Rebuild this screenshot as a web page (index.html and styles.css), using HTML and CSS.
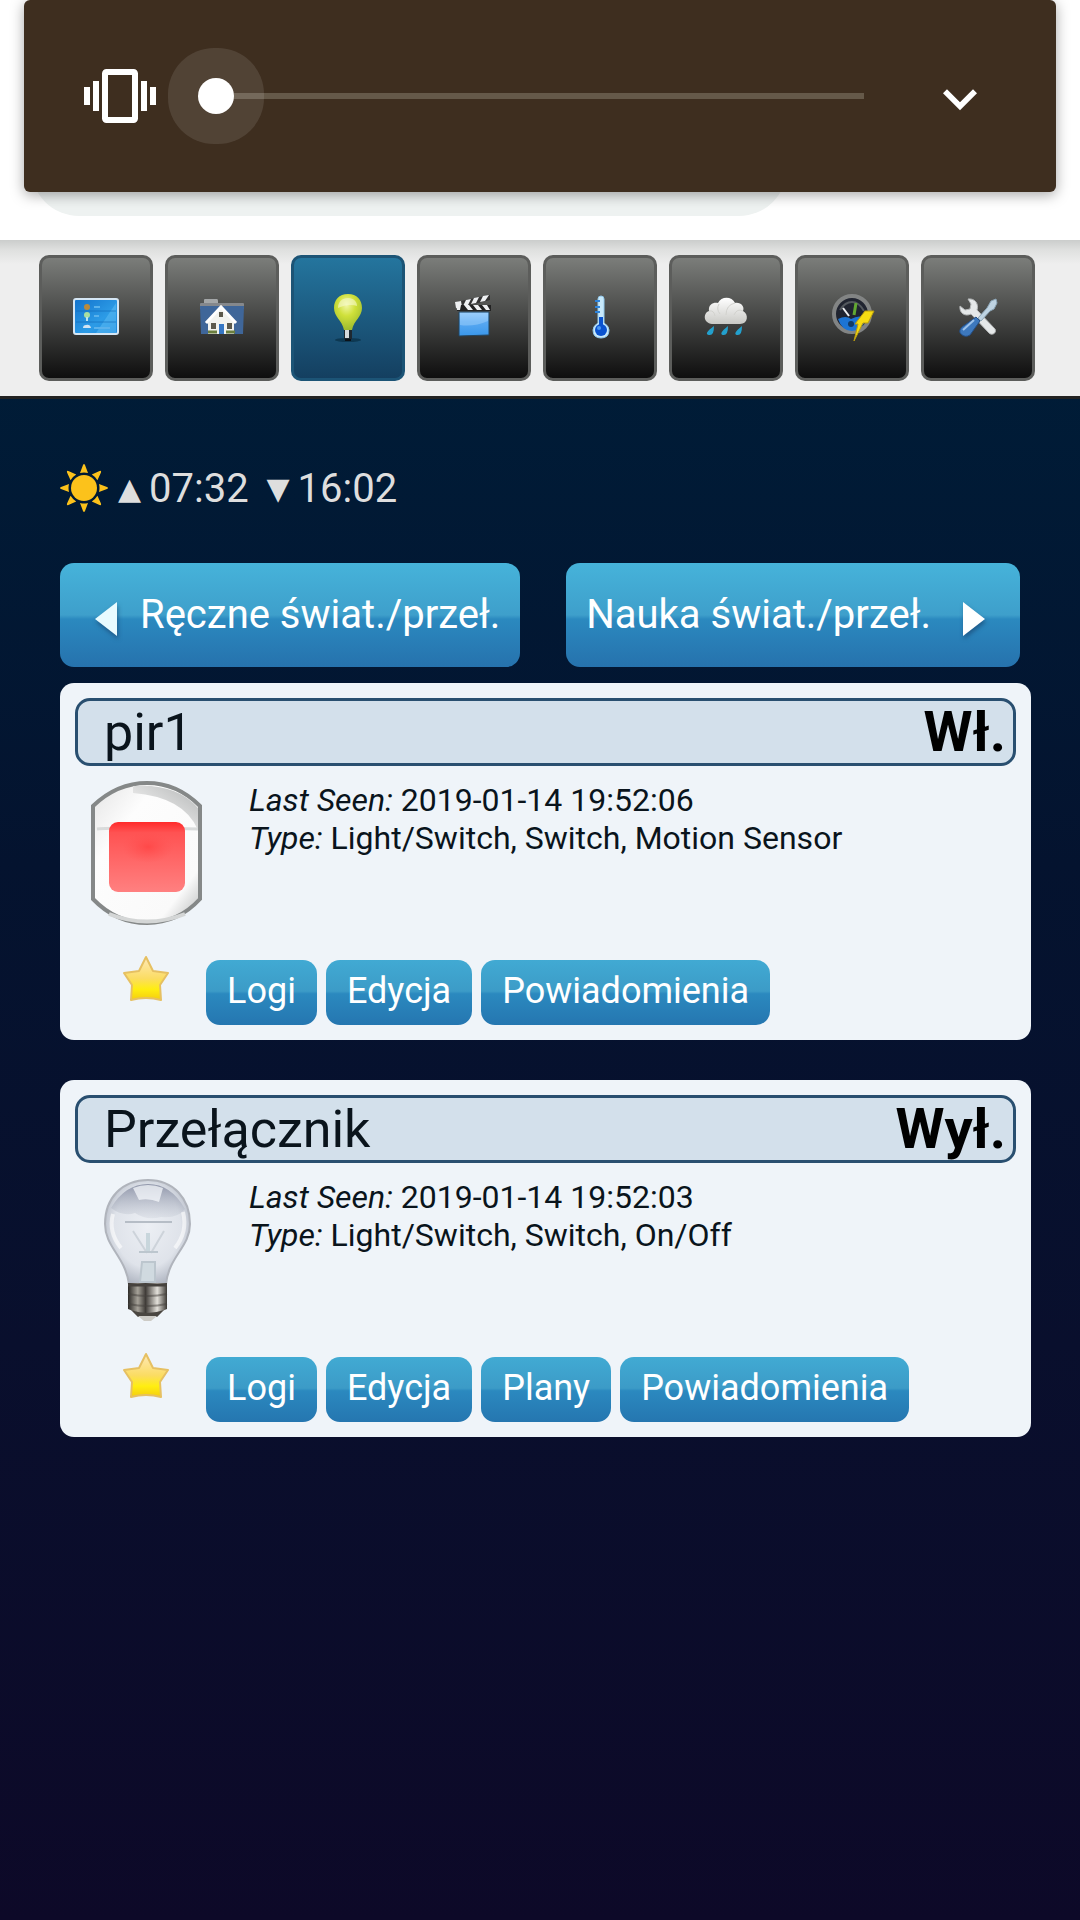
FILE: index.html
```
<!DOCTYPE html>
<html lang="pl">
<head>
  <meta charset="UTF-8" />
  <meta name="viewport" content="width=device-width, initial-scale=1.0"/>
  <title>Domoticz</title>
  <link rel="stylesheet" href="styles.css">
</head>
<body>

  <header class="browser-bar">
    <div class="omnibox"></div>
    <div class="volume-panel">
      <svg class="vibrate" viewBox="0 0 24 24" aria-hidden="true">
        <path fill="#fff" d="M0 15h2V9H0v6zm3 2h2V7H3v10zm19-8v6h2V9h-2zm-3 8h2V7h-2v10zM16.500 3h-9C6.670 3 6 3.670 6 4.500v15c0 .83.67 1.500 1.500 1.500h9c.83 0 1.500-.67 1.500-1.500v-15c0-.83-.67-1.500-1.500-1.500zM16 19H8V5h8v14z"/>
      </svg>
      <input type="range" class="volume" min="0" max="100" value="0" aria-label="Volume">
      <button type="button" class="expand" aria-label="Expand">
        <svg viewBox="0 -1 24 24"><path fill="#fff" d="M16.590 8.590L12 13.170 7.410 8.590 6 10l6 6 6-6z"/></svg>
      </button>
    </div>
  </header>

  <nav class="navbar">
    <a href="#floorplan" aria-label="Floorplan">
      <svg viewBox="0 0 48 48">
        <defs><linearGradient id="screen" x1="0" y1="0" x2="1" y2="1"><stop offset="0" stop-color="#1272cc"/><stop offset=".6" stop-color="#2c9be6"/><stop offset="1" stop-color="#1c86dc"/></linearGradient></defs>
        <rect x="2" y="5" width="44" height="35" rx="2" fill="url(#screen)" stroke="#d5e6f4" stroke-width="2"/>
        <path d="M24 39L44 9v30z" fill="#5fc0f5" opacity=".5"/>
        <path d="M4 17h40M4 28h40" stroke="#1166b4" opacity=".6"/>
        <circle cx="15" cy="13" r="3" fill="#b98a3c"/>
        <circle cx="15" cy="21" r="3" fill="#a9dfa0"/><path d="M14 23h2v4h-2z" fill="#bde4ee"/>
        <path d="M11 34q0-3 3-3 4-1 5 3z" fill="#d4e4f2"/>
        <path d="M22 13h6M22 22h5M22 34h16" stroke="#5bb2ec" stroke-width="2"/>
      </svg>
    </a>
    <a href="#dashboard" aria-label="Dashboard">
      <svg viewBox="0 0 48 48">
        <path d="M6 10V6q0-1 1-1h12q1 0 1 2v3z" fill="#a4a7a8"/>
        <path d="M2 10q0-1 1-1h42q1 0 1 1v5H2z" fill="#85888c"/>
        <path d="M2 12h44l-1 28H3z" fill="#3f6699"/>
        <path d="M10 27L23 14l13 13v13H10z" fill="#f2f3ef"/>
        <path d="M8 29L23 13l15 16" fill="none" stroke="#fff" stroke-width="3"/>
        <path d="M21 18h4v5h-4zM13 29h5v6h-5zM29 29h5v6h-5z" fill="#5c594c"/>
        <path d="M21 30h5v10h-5z" fill="#3677c4"/>
        <path d="M10 38h9M28 38h9" stroke="#6b7f3f" stroke-width="3"/>
      </svg>
    </a>
    <a href="#lights" class="current" aria-label="Lights">
      <svg viewBox="0 0 48 48">
        <defs><radialGradient id="glow" cx=".45" cy=".3" r=".7"><stop offset="0" stop-color="#f2f7a6"/><stop offset=".45" stop-color="#cfe03a"/><stop offset="1" stop-color="#9dbb2e"/></radialGradient></defs>
        <ellipse cx="24" cy="46" rx="13" ry="2" fill="#0d3852"/>
        <path d="M24 0C15 0 10 6 10 14c0 9 8 12 10 22h8c2-10 10-13 10-22C38 6 33 0 24 0z" fill="url(#glow)"/>
        <path d="M14 14c0-6 4-10 10-10s9 4 9 8c-5-2-13-1-19 2z" fill="#f7fad0" opacity=".6"/>
        <path d="M20 36h8v9h-8z" fill="#1e2830"/><path d="M21 36h4v8h-4z" fill="#d6dadd"/><path d="M21 45h6v2h-6z" fill="#0c1218"/>
      </svg>
    </a>
    <a href="#scenes" aria-label="Scenes">
      <svg viewBox="-2 0 48 48">
        <defs><linearGradient id="slate" x1="0" y1="0" x2="0" y2="1"><stop offset="0" stop-color="#8cc6fa"/><stop offset=".4" stop-color="#5aa9f2"/><stop offset="1" stop-color="#3a97ea"/></linearGradient></defs>
        <path d="M4 8l34-7v5L5 14z" fill="#333"/>
        <path d="M3 8l6-1 1 6-6 1zM14 6l5-1-3 6-5 1zM22 4l5-1-3 6-5 1zM31 2l6-1-4 6-5 1z" fill="#eef0f2"/>
        <path d="M5 11h34v6H5z" fill="#222"/>
        <path d="M4 10l5 1-1 5H5zM12 11h5l4 5h-5zM21 11h5l4 5h-5zM30 11h5l3 5h-4z" fill="#eef0f2"/>
        <path d="M7 18h30v23l-30 1z" fill="url(#slate)" stroke="#23445f"/>
        <path d="M8 19h28v8q-14 6-28 4z" fill="#b4dcff" opacity=".4"/>
      </svg>
    </a>
    <a href="#temperature" aria-label="Temperature">
      <svg viewBox="-1 0 48 48">
        <path d="M21 5q0-3 3-3t3 3v24q5 3 5 7 0 8-8 8t-8-8q0-4 5-7z" fill="#c8e9fb" stroke="#93c9ec"/>
        <circle cx="24" cy="36" r="6" fill="#0a53cf"/>
        <path d="M22 23h4v12h-4z" fill="#0a53cf"/>
        <circle cx="22" cy="34" r="2" fill="#4b98f3"/>
        <path d="M18 7h5M18 13h5M18 18h5" stroke="#2c83dd" stroke-width="2"/>
      </svg>
    </a>
    <a href="#weather" aria-label="Weather">
      <svg viewBox="0 0 48 48">
        <defs><linearGradient id="cloud" x1="0" y1="0" x2="0" y2="1"><stop offset="0" stop-color="#fff"/><stop offset="1" stop-color="#c9c9c5"/></linearGradient></defs>
        <path d="M10 30c-9-1-9-11-3-13-1-7 5-9 9-8 3-7 14-7 17 0 6-1 10 4 8 8 6 3 5 13-3 13z" fill="url(#cloud)"/>
        <path d="M7 17q5-1 6 5M17 10q-3 5 1 10M33 9q-9 2-9 12M41 17q-6-3-9 4" fill="none" stroke="#d2d2ce"/>
        <path d="M12 32q0 10-5 9-6-1 5-9zM26 32q0 10-5 9-5-1 5-9zM40 32q0 10-5 9-5-1 5-9z" fill="#23a0cd"/>
      </svg>
    </a>
    <a href="#utility" aria-label="Utility">
      <svg viewBox="-4 0 48 48">
        <circle cx="20" cy="20" r="18" fill="#202430" stroke="#828484" stroke-width="4"/>
        <path d="M6 25q8-4 13 0 9-5 15 0-4 12-14 12T6 25z" fill="#1c74d4"/>
        <path d="M8 16q5-8 12-8t12 9" fill="none" stroke="#53585e" stroke-width="2"/>
        <path d="M11 14l6 8" stroke="#eef0f2" stroke-width="2"/>
        <path d="M24 9l-2 12" stroke="#61a832" stroke-width="3"/>
        <circle cx="19" cy="30" r="3" fill="#123a66"/>
        <path d="M33 17h9l-6 12h-5L22 47l4-17h-3z" fill="#f7dc12" stroke="#b99c10"/>
      </svg>
    </a>
    <a href="#setup" aria-label="Setup">
      <svg viewBox="-2 0 48 48">
        <path d="M12 5c7-1 11 5 9 11l18 19c2 4-3 7-6 4L15 20C9 23 3 19 4 12l5 4 5-1 1-5z" fill="#e5e8e9" stroke="#b5b8b9"/>
        <path d="M35 7l5-2 1 4-3 6-4 2-9 10-3-3 9-10z" fill="#bed3e2" stroke="#8ca5b7"/>
        <path d="M20 23l4 4-10 14q-5 3-9-1-3-3 1-7z" fill="#3d78bd" stroke="#244f86"/>
        <path d="M18 26L7 36" stroke="#9cc2ea" stroke-width="2"/>
      </svg>
    </a>
  </nav>

  <main>
    <div class="suntimes">
      <svg viewBox="0 0 48 48" aria-hidden="true">
        <g fill="#fcc21b">
          <circle cx="24" cy="24" r="13"/>
          <g id="rays"><path d="M20 9l3-8q1-2 2 0l3 8q-4-1-8 0zM20 39l3 8q1 2 2 0l3-8q-4 1-8 0zM9 20l-8 3q-2 1 0 2l8 3q-1-4 0-8zM39 20l8 3q2 1 0 2l-8 3q1-4 0-8z"/></g>
          <use href="#rays" transform="rotate(45 24 24)"/>
        </g>
      </svg>
      <span class="arrow">▲</span><span>07:32</span>
      <span class="arrow down">▼</span><span>16:02</span>
    </div>

    <div class="toolbar">
      <button type="button" class="btn btn-large">
        <svg class="prev" viewBox="0 0 24 36"><path d="M23 1v34L1 18z" fill="#e9fbff"/></svg>
        Ręczne świat./przeł.
      </button>
      <button type="button" class="btn btn-large">
        Nauka świat./przeł.
        <svg class="next" viewBox="0 0 24 36"><path d="M1 1v34l22-17z" fill="#fff"/></svg>
      </button>
    </div>

    <section class="device">
      <div class="device-head">
        <h2>pir1</h2>
        <strong>Wł.</strong>
      </div>
      <div class="device-body">
        <svg class="device-icon" viewBox="0 0 144 144" aria-hidden="true">
          <defs>
            <linearGradient id="shell" x1="0" y1="0" x2="1" y2="1"><stop offset="0" stop-color="#e4e4e4"/><stop offset=".3" stop-color="#fdfdfd"/><stop offset=".8" stop-color="#fafafa"/><stop offset="1" stop-color="#b4b6b6"/></linearGradient>
            <linearGradient id="shade" x1="0" y1="1" x2="1" y2="0"><stop offset=".2" stop-color="#f4f4f4"/><stop offset="1" stop-color="#b4b6b6"/></linearGradient>
            <linearGradient id="lens" x1="0" y1="0" x2="0" y2="1"><stop offset="0" stop-color="#ff2a2a"/><stop offset=".15" stop-color="#ff5252"/><stop offset=".5" stop-color="#ff6565"/><stop offset="1" stop-color="#ff8080"/></linearGradient>
            <radialGradient id="spot"><stop offset="0" stop-color="#ff4040" stop-opacity=".7"/><stop offset="1" stop-color="#ff5050" stop-opacity="0"/></radialGradient>
          </defs>
          <path d="M18 25Q42 2 72 2t53 23v93q-22 24-53 24t-54-24z" fill="url(#shell)" stroke="#858888" stroke-width="4"/>
          <path d="M58 5q44-3 65 22v22q-14-33-65-37z" fill="url(#shade)"/>
          <path d="M22 48q16-2 101 0" fill="none" stroke="#d9dbdb" stroke-width="3"/>
          <path d="M34 133q38 15 76 0" fill="none" stroke="#d4d6d6" stroke-width="4"/>
          <rect x="34" y="41" width="76" height="70" rx="9" fill="url(#lens)"/>
          <ellipse cx="73" cy="66" rx="26" ry="16" fill="url(#spot)"/>
        </svg>
        <p><i>Last Seen:</i> 2019-01-14 19:52:06<br><i>Type:</i> Light/Switch, Switch, Motion Sensor</p>
      </div>
      <div class="device-actions">
        <svg class="star" viewBox="0 0 48 48" aria-hidden="true">
          <defs><linearGradient id="gold" x1="0" y1="0" x2="0" y2="1"><stop offset="0" stop-color="#ffe9b8"/><stop offset=".5" stop-color="#fbdc62"/><stop offset=".75" stop-color="#ffee10"/><stop offset="1" stop-color="#f4cd10"/></linearGradient></defs>
          <path id="star-shape" d="M24 2l7 14 15 2-8 12 1 15q-15-4-30 0l1-15L2 18l15-2z" fill="url(#gold)" stroke="#e6c062" stroke-width="2" stroke-linejoin="round"/>
        </svg>
        <button type="button" class="btn">Logi</button>
        <button type="button" class="btn">Edycja</button>
        <button type="button" class="btn">Powiadomienia</button>
      </div>
    </section>

    <section class="device">
      <div class="device-head">
        <h2>Przełącznik</h2>
        <strong>Wył.</strong>
      </div>
      <div class="device-body">
        <svg class="device-icon" viewBox="0 0 144 144" aria-hidden="true">
          <defs>
            <radialGradient id="glass" cx=".5" cy=".45" r=".6"><stop offset="0" stop-color="#eceff4"/><stop offset=".65" stop-color="#dfe3ea"/><stop offset="1" stop-color="#a9afbc"/></radialGradient>
            <linearGradient id="haze" x1="0" y1="0" x2="0" y2="1"><stop offset="0" stop-color="#9096aa"/><stop offset="1" stop-color="#b9bfcb" stop-opacity=".2"/></linearGradient>
            <linearGradient id="cap" x1="0" y1="0" x2="1" y2="0"><stop offset="0" stop-color="#2c2a27"/><stop offset=".25" stop-color="#a6a299"/><stop offset=".45" stop-color="#403c38"/><stop offset=".75" stop-color="#e3e0da"/><stop offset="1" stop-color="#3b3834"/></linearGradient>
          </defs>
          <path d="M73 2C47 2 30 20 30 46c0 23 20 32 24 60h37c3-28 24-37 24-60 0-26-17-44-42-44z" fill="url(#glass)" stroke="#b0b4bc" stroke-width="2"/>
          <path d="M36 30Q50 6 73 6t37 25q-8 10-24 8-14 4-26-4-12 4-24-5z" fill="url(#haze)"/>
          <path d="M58 10q15-6 30 0l-4 14q-10-4-20-2z" fill="#fafcff" opacity=".7"/>
          <path d="M38 36q-5 18 8 34M108 34q5 20-8 36" fill="none" stroke="#fff" stroke-width="4" opacity=".6"/>
          <path d="M50 44h47" stroke="#b6bdc6" stroke-width="2"/>
          <path d="M58 53l14 22M89 53L76 75" fill="none" stroke="#cdd3da" stroke-width="2"/>
          <path d="M73 55v19" stroke="#c8d6dc" stroke-width="4"/>
          <path d="M64 74h19M67 84h13v20H65z" fill="#d0dae0" stroke="#bcc6ce" stroke-width="2"/>
          <path d="M53 105h39v26q-19 9-39 0z" fill="url(#cap)"/>
          <path d="M53 107h39" stroke="#46423e" stroke-width="3"/>
          <path d="M53 116q20 4 39 0M53 126q20 4 39 0" fill="none" stroke="#46423e" stroke-width="2" opacity=".5"/>
          <path d="M56 132q16 6 33 0l-7 7H63z" fill="#4a4641"/>
          <path d="M63 138h19l-6 5h-7z" fill="#cdcbc6"/>
        </svg>
        <p><i>Last Seen:</i> 2019-01-14 19:52:03<br><i>Type:</i> Light/Switch, Switch, On/Off</p>
      </div>
      <div class="device-actions">
        <svg class="star" viewBox="0 0 48 48" aria-hidden="true"><use href="#star-shape"/></svg>
        <button type="button" class="btn">Logi</button>
        <button type="button" class="btn">Edycja</button>
        <button type="button" class="btn">Plany</button>
        <button type="button" class="btn">Powiadomienia</button>
      </div>
    </section>
  </main>

</body>
</html>
```
FILE: styles.css
```
* {
  box-sizing: border-box;
}
html {
  min-height: 100%;
  background: linear-gradient(#001c37 20%, #04132f 45%, #090f2d 70%, #0d0928);
}
body {
  margin: 0;
  font-family: Roboto, "Liberation Sans", sans-serif;
  color: #0a141c;
}
svg {
  display: block;
  flex: none;
}

/* volume overlay */
.browser-bar {
  position: relative;
  background: #fff;
  padding: 0 24px 48px;
}
.omnibox {
  position: absolute;
  left: 31px;
  bottom: 24px;
  width: 70%;
  height: 96px;
  border-radius: 48px;
  background: #eef2f1;
}
.volume-panel {
  position: relative;
  display: flex;
  align-items: center;
  height: 192px;
  padding: 0 62px 0 60px;
  border-radius: 6px;
  background: #3e2e1f;
  box-shadow: 0 3px 14px rgba(0,0,0,0.35);
}
.vibrate {
  width: 72px;
  height: 72px;
}
.volume {
  flex: 1;
  min-width: 0;
  height: 36px;
  margin: 0 62px 0 42px;
  appearance: none;
  background: linear-gradient(#655949, #655949) 18px 50% / 100% 6px no-repeat;
}
.volume::-webkit-slider-thumb {
  appearance: none;
  width: 36px;
  height: 36px;
  border-radius: 50%;
  background: #fff;
  box-shadow: 0 0 0 30px rgba(255,255,255,0.1);
}
.expand {
  padding: 0;
  border: none;
  background: none;
}
.expand svg {
  width: 68px;
  height: 68px;
}

.navbar {
  display: flex;
  gap: 12px;
  padding: 15px 45px 15px 39px;
  background: linear-gradient(#cbcdcc, #dfe0df 10px, #eee 24px);
  border-bottom: 3px solid #222;
}
.navbar a {
  flex: 1;
  display: flex;
  align-items: center;
  justify-content: center;
  height: 126px;
  border: 3px solid #5c5d5b;
  border-radius: 10px;
  background: linear-gradient(#7b7d7a, #0e0e0e);
}
.navbar a.current {
  border-color: #1c5476;
  background: linear-gradient(#24759e, #143f60);
}
.navbar svg {
  width: 48px;
  height: 48px;
}

main {
  padding: 60px 49px 60px 60px;
}
.suntimes {
  display: flex;
  align-items: center;
  height: 58px;
  margin-bottom: 46px;
  font-size: 40px;
  color: #dedede;
}
.suntimes svg {
  width: 48px;
  height: 48px;
  margin-right: 10px;
}
.suntimes .arrow {
  width: 31px;
  font-family: "DejaVu Sans", sans-serif;
  font-size: 30px;
}
.suntimes .down {
  margin-left: 18px;
}

.btn {
  height: 65px;
  padding: 0 21px 3px;
  border: none;
  border-radius: 14px;
  background: linear-gradient(#41aad3, #3c9bc7 48%, #2b89bf 52%, #2576b0);
  color: #fff;
  font-family: inherit;
  font-size: 36px;
  white-space: nowrap;
}
.toolbar {
  display: flex;
  justify-content: space-between;
  margin: 0 11px 16px 0;
}
.btn-large {
  display: flex;
  align-items: center;
  height: 104px;
  padding: 0 20px 2px;
  background: linear-gradient(#46b3da, #3e9fcb 50%, #2b89bf 54%, #2672ad);
  font-size: 40px;
}
.btn-large svg {
  width: 24px;
  height: 36px;
  filter: drop-shadow(1px 3px 2px rgba(20,50,90,0.5));
}
.btn-large .prev {
  margin: 9px 22px 0 14px;
}
.btn-large .next {
  margin: 9px 14px 0 31px;
}

.device {
  margin-bottom: 40px;
  padding: 15px;
  border-radius: 14px;
  background: #eff4f9;
}
.device-head {
  display: flex;
  align-items: center;
  justify-content: space-between;
  height: 68px;
  padding: 0 7px 0 26px;
  border: 3px solid #294f70;
  border-radius: 15px;
  background: #d3e0eb;
}
.device-head h2 {
  margin: 0;
  font-size: 52px;
  font-weight: 400;
}
.device-head strong {
  font-size: 56px;
  color: #000;
}
.device-body {
  display: flex;
  gap: 30px;
  margin-top: 15px;
}
.device-icon {
  width: 144px;
  height: 144px;
}
.device-body p {
  margin: 0;
  font-size: 32px;
  line-height: 38px;
}
.device-actions {
  display: flex;
  gap: 9px;
  margin-top: 35px;
}
.star {
  width: 48px;
  height: 48px;
  margin: -5px 27px 0 47px;
}
```
